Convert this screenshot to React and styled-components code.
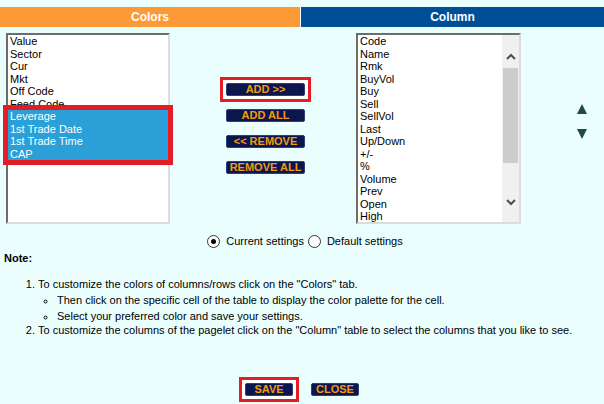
import React from 'react';
import styled, { createGlobalStyle } from 'styled-components';

const GlobalStyle = createGlobalStyle`
  html, body {
    margin: 0;
    padding: 0;
    background: #ebfefe;
  }
  body {
    font-family: "Liberation Sans", Arial, sans-serif;
    font-size: 11px;
    color: #000;
  }
`;

const Page = styled.div`
  width: 604px;
  height: 404px;
  padding-top: 7px;
  box-sizing: border-box;
  overflow: hidden;
`;

const Tabs = styled.div`
  display: grid;
  grid-template-columns: 300px 1fr;
  column-gap: 1px;
  height: 20px;
`;

const Tab = styled.div`
  background: ${(p) => (p.$active ? '#fe9a35' : '#004e98')};
  color: #fff;
  font-weight: bold;
  font-size: 12px;
  line-height: 20px;
  text-align: center;
`;

const MainRow = styled.div`
  display: flex;
  margin-top: 6px;
  padding-left: 6px;
  height: 191px;
`;

const ListBox = styled.div`
  width: ${(p) => p.$width}px;
  height: 100%;
  box-sizing: border-box;
  background: #fff;
  border-top: 2px solid #6d6d6d;
  border-left: 2px solid #6d6d6d;
  border-right: 2px solid #dcdcdc;
  border-bottom: 2px solid #dcdcdc;
  display: flex;
`;

const Items = styled.div`
  flex: 1;
  overflow: ${(p) => (p.$clip ? 'hidden' : 'visible')};
`;

const Item = styled.div`
  padding-left: 2px;
  height: 12.5px;
  line-height: 12.5px;
  white-space: nowrap;
  background: ${(p) => (p.$selected ? '#2a9fd8' : 'transparent')};
  color: ${(p) => (p.$selected ? '#fff' : '#000')};
`;

const SelectedGroup = styled.div`
  position: relative;
  outline: 5px solid #e41c24;
`;

const ButtonCol = styled.div`
  width: 186px;
  padding-left: 5px;
  box-sizing: border-box;
  display: flex;
  flex-direction: column;
  align-items: center;
  padding-top: 50px;
  gap: 13px;
`;

const NavButton = styled.button`
  width: ${(p) => p.$width || 79}px;
  height: 13px;
  padding: 0;
  margin: 0;
  border: 1px solid #2c3f78;
  border-radius: 2px;
  background: #0b154e;
  color: #f49a0c;
  font-family: "Liberation Sans", Arial, sans-serif;
  font-weight: bold;
  font-size: 11px;
  line-height: 11px;
  display: block;
  cursor: pointer;
`;

const Marked = styled.div`
  outline: 3px solid #e41c24;
  outline-offset: 3px;
  box-shadow: 0 0 0 3px #fff;
  background: #fff;
`;

const ScrollBar = styled.div`
  width: 17px;
  background: #f0f0f0;
  display: flex;
  flex-direction: column;
`;

const ScrollBtn = styled.div`
  height: ${(p) => p.$h}px;
  display: flex;
  justify-content: center;
  padding-top: ${(p) => p.$top}px;
  box-sizing: border-box;
`;

const Thumb = styled.div`
  height: 95px;
  margin: 0 1px;
  background: #cdcdcd;
`;

const Track = styled.div`
  flex: 1;
`;

const ArrowCol = styled.div`
  display: flex;
  flex-direction: column;
  gap: 15px;
  padding-top: 71px;
  margin-left: 56px;
`;

const RadioRow = styled.div`
  display: flex;
  justify-content: center;
  align-items: center;
  margin-top: 9px;
  padding-left: 10px;
  height: 16px;
`;

const RadioLabel = styled.label`
  display: flex;
  align-items: center;
  margin-right: 4px;
`;

const RadioDot = styled.span`
  width: 11px;
  height: 11px;
  border-radius: 50%;
  border: 1px solid #333;
  background: #fff;
  margin-right: 6px;
  display: flex;
  align-items: center;
  justify-content: center;
  &::after {
    content: '';
    width: 5px;
    height: 5px;
    border-radius: 50%;
    background: ${(p) => (p.$checked ? '#000' : 'transparent')};
  }
`;

const NoteTitle = styled.div`
  font-weight: bold;
  margin: 3px 0 0 4px;
  line-height: 13px;
`;

const NoteList = styled.ol`
  margin: 12px 0 0 0;
  padding-left: 38px;
  line-height: 14px;
`;

const SubList = styled.ul`
  margin: 0;
  padding-left: 19px;
  list-style-type: circle;
  & > li {
    margin-top: 2px;
  }
`;

const Footer = styled.div`
  display: flex;
  justify-content: center;
  gap: 18px;
  margin-top: 46px;
`;

const Chevron = ({ up }) => (
  <svg width="10" height="7" viewBox="0 0 10 7">
    <polyline
      points={up ? '1,6 5,2 9,6' : '1,1 5,5 9,1'}
      fill="none"
      stroke="#4f4f4f"
      strokeWidth="2"
    />
  </svg>
);

const Triangle = ({ up }) => (
  <svg width="10" height="10" viewBox="0 0 10 10">
    <polygon points={up ? '5,0 10,10 0,10' : '0,0 10,0 5,10'} fill="#1f4a44" />
  </svg>
);

const colorItems = ['Value', 'Sector', 'Cur', 'Mkt', 'Off Code', 'Feed Code'];
const selectedItems = ['Leverage', '1st Trade Date', '1st Trade Time', 'CAP'];
const columnItems = [
  'Code', 'Name', 'Rmk', 'BuyVol', 'Buy', 'Sell', 'SellVol', 'Last',
  'Up/Down', '+/-', '%', 'Volume', 'Prev', 'Open', 'High',
];

const App = () => (
  <Page>
    <GlobalStyle />
    <Tabs>
      <Tab $active>Colors</Tab>
      <Tab>Column</Tab>
    </Tabs>

    <MainRow>
      <ListBox $width={164}>
        <Items>
          {colorItems.map((c) => (
            <Item key={c}>{c}</Item>
          ))}
          <SelectedGroup>
            {selectedItems.map((c) => (
              <Item key={c} $selected>{c}</Item>
            ))}
          </SelectedGroup>
        </Items>
      </ListBox>

      <ButtonCol>
        <Marked>
          <NavButton>ADD &gt;&gt;</NavButton>
        </Marked>
        <NavButton>ADD ALL</NavButton>
        <NavButton>&lt;&lt; REMOVE</NavButton>
        <NavButton>REMOVE ALL</NavButton>
      </ButtonCol>

      <ListBox $width={165}>
        <Items $clip>
          {columnItems.map((c) => (
            <Item key={c}>{c}</Item>
          ))}
        </Items>
        <ScrollBar>
          <ScrollBtn $h={33} $top={18}>
            <Chevron up />
          </ScrollBtn>
          <Thumb />
          <Track />
          <ScrollBtn $h={32} $top={9}>
            <Chevron />
          </ScrollBtn>
        </ScrollBar>
      </ListBox>

      <ArrowCol>
        <Triangle up />
        <Triangle />
      </ArrowCol>
    </MainRow>

    <RadioRow>
      <RadioLabel>
        <RadioDot $checked />
        Current settings
      </RadioLabel>
      <RadioLabel>
        <RadioDot />
        Default settings
      </RadioLabel>
    </RadioRow>

    <NoteTitle>Note:</NoteTitle>
    <NoteList>
      <li>
        To customize the colors of columns/rows click on the "Colors" tab.
        <SubList>
          <li>Then click on the specific cell of the table to display the color palette for the cell.</li>
          <li>Select your preferred color and save your settings.</li>
        </SubList>
      </li>
      <li>To customize the columns of the pagelet click on the "Column" table to select the columns that you like to see.</li>
    </NoteList>

    <Footer>
      <Marked>
        <NavButton $width={48}>SAVE</NavButton>
      </Marked>
      <NavButton $width={48}>CLOSE</NavButton>
    </Footer>
  </Page>
);

export default App;
